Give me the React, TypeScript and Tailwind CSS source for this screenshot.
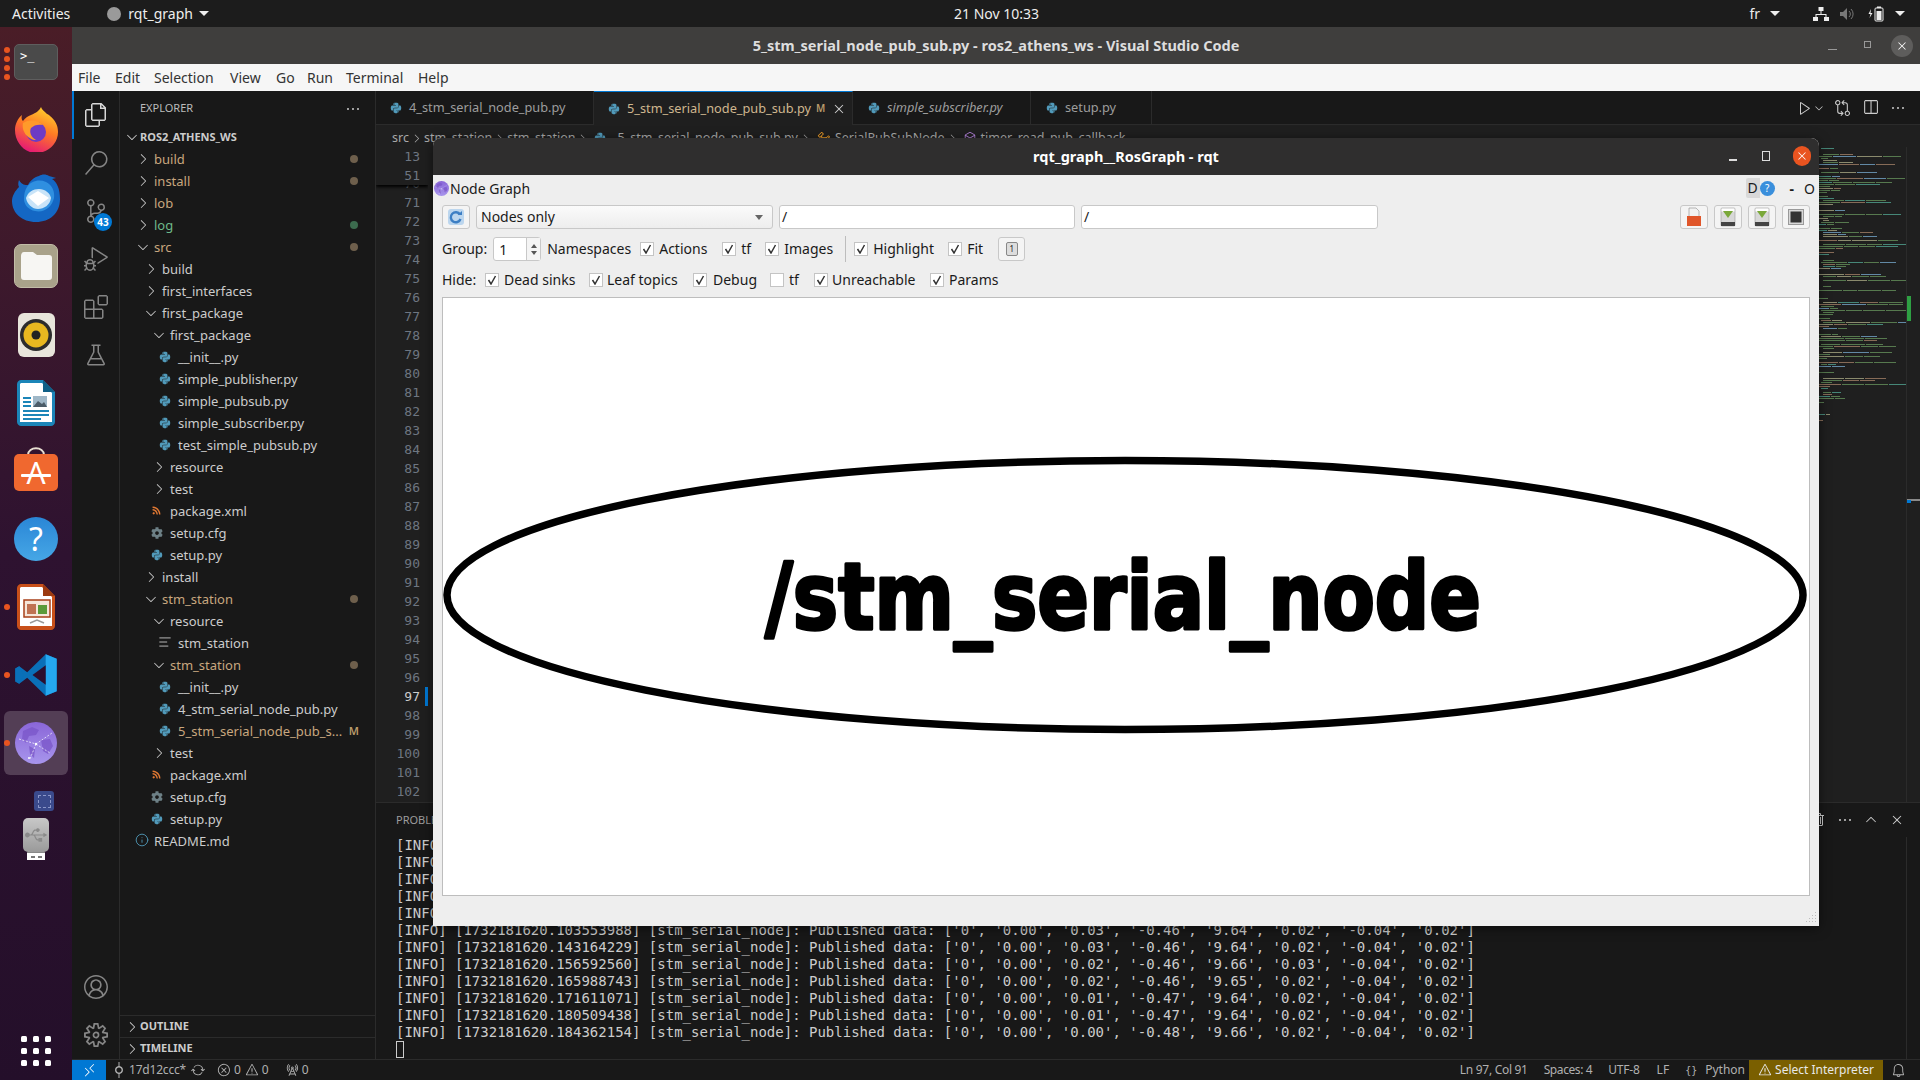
import React from "react";
import { FaPython, FaCog, FaRss, FaUsb } from "react-icons/fa";
import { Info, AlignLeft } from "lucide-react";
import {
  VscFiles, VscSearch, VscSourceControl, VscDebugAlt, VscExtensions, VscBeaker, VscAccount, VscSettingsGear,
  VscRemote, VscSync, VscError, VscWarning, VscRadioTower, VscBell, VscPlay, VscChevronDown, VscChevronUp, VscChevronRight,
  VscGitCompare, VscSplitHorizontal, VscEllipsis, VscClose, VscTrash, VscGitCommit, VscSymbolClass, VscSymbolMethod,
} from "react-icons/vsc";

const TAN = "text-[#c8a77f]";
const PLAIN = "text-[#cccccc]";

type Row = { t: string; l: number; k: string; c?: string; dot?: string; m?: boolean };
const rows: Row[] = [
  { t: "build", l: 1, k: "c", c: TAN, dot: "bg-[#6e5f4c]" },
  { t: "install", l: 1, k: "c", c: TAN, dot: "bg-[#6e5f4c]" },
  { t: "lob", l: 1, k: "c", c: TAN },
  { t: "log", l: 1, k: "c", c: "text-[#6fb98a]", dot: "bg-[#3c6b4e]" },
  { t: "src", l: 1, k: "o", c: TAN, dot: "bg-[#6e5f4c]" },
  { t: "build", l: 2, k: "c" },
  { t: "first_interfaces", l: 2, k: "c" },
  { t: "first_package", l: 2, k: "o" },
  { t: "first_package", l: 3, k: "o" },
  { t: "__init__.py", l: 4, k: "py" },
  { t: "simple_publisher.py", l: 4, k: "py" },
  { t: "simple_pubsub.py", l: 4, k: "py" },
  { t: "simple_subscriber.py", l: 4, k: "py" },
  { t: "test_simple_pubsub.py", l: 4, k: "py" },
  { t: "resource", l: 3, k: "c" },
  { t: "test", l: 3, k: "c" },
  { t: "package.xml", l: 3, k: "xml" },
  { t: "setup.cfg", l: 3, k: "cfg" },
  { t: "setup.py", l: 3, k: "py" },
  { t: "install", l: 2, k: "c" },
  { t: "stm_station", l: 2, k: "o", c: TAN, dot: "bg-[#6e5f4c]" },
  { t: "resource", l: 3, k: "o" },
  { t: "stm_station", l: 4, k: "txt" },
  { t: "stm_station", l: 3, k: "o", c: TAN, dot: "bg-[#6e5f4c]" },
  { t: "__init__.py", l: 4, k: "py" },
  { t: "4_stm_serial_node_pub.py", l: 4, k: "py" },
  { t: "5_stm_serial_node_pub_s...", l: 4, k: "py", c: TAN, m: true },
  { t: "test", l: 3, k: "c" },
  { t: "package.xml", l: 3, k: "xml" },
  { t: "setup.cfg", l: 3, k: "cfg" },
  { t: "setup.py", l: 3, k: "py" },
  { t: "README.md", l: 1, k: "info" },
];

const PADS: Record<number, string> = { 1: "pl-[34px]", 2: "pl-[42px]", 3: "pl-[50px]", 4: "pl-[58px]" };

function RowIcon({ k }: { k: string }) {
  if (k === "c") return <VscChevronRight className="absolute left-[-19px] top-[3px] text-[16px] text-[#c5c5c5]" />;
  if (k === "o") return <VscChevronDown className="absolute left-[-19px] top-[3px] text-[16px] text-[#c5c5c5]" />;
  if (k === "py") return <FaPython className="absolute left-[-19px] top-[5px] text-[12px] text-[#519aba]" />;
  if (k === "cfg") return <FaCog className="absolute left-[-19px] top-[5px] text-[12px] text-[#6d8086]" />;
  if (k === "xml") return <FaRss className="absolute left-[-18px] top-[6px] text-[9px] text-[#e37933]" />;
  if (k === "txt") return <AlignLeft className="absolute left-[-20px] top-[3px] w-[14px] h-[14px] text-[#cccccc]" strokeWidth={1.5} />;
  return <Info className="absolute left-[-19px] top-[3px] w-[14px] h-[14px] text-[#519aba]" strokeWidth={1.5} />;
}

const Python = () => <FaPython className="text-[12px] text-[#519aba] shrink-0" />;

function Firefox() {
  return (
    <svg width="46" height="46" viewBox="0 0 46 46">
      <defs>
        <linearGradient id="ff" x1="0.7" y1="0" x2="0.3" y2="1">
          <stop offset="0" stopColor="#ffd22e" />
          <stop offset="0.45" stopColor="#ff7a24" />
          <stop offset="1" stopColor="#e3137a" />
        </linearGradient>
      </defs>
      <path d="M2 24C2 18 5 12 9 9c-1 3 0 5 1 6 2-3 5-5 8-6 5-2 9-5 10-8 1 3 3 4 6 7 1 0 2 1 3 2 5 4 8 9 8 16 0 12-10 21-22 21S2 36 2 24z" fill="url(#ff)" />
      <circle cx="23" cy="26" r="10" fill="#6d3bc4" />
      <path d="M10 17c6-4 16-3 20 2-5-1-9 0-12 3-2 4 0 9 5 12-7 0-15-8-13-17z" fill="#ff9a2a" />
    </svg>
  );
}
function Thunderbird() {
  return (
    <svg width="50" height="48" viewBox="0 0 50 48">
      <path d="M8 6c-1 3-1 5 0 7-4 4-7 9-7 14 0 12 10 21 24 21s24-9 24-23c0-10-3-17-8-20l4-1-7-2c-3-2-7-2-10 0-5 1-9 5-11 9-3 0-6 0-9-5z" fill="#1467c4" />
      <path d="M16 13c4-6 12-8 19-5 6 3 9 9 8 16-2 9-10 15-19 13-6-1-11-6-11-12 0-5 1-9 3-12z" fill="#2f8fe0" />
      <path d="M15 24c2-6 7-9 13-9s11 4 12 9c-1 7-7 11-13 11s-11-5-12-11z" fill="#c9e4f8" />
      <path d="M17 23l10-6 11 7-11 8z" fill="#ffffff" />
    </svg>
  );
}
function Files() {
  return (
    <div className="w-[44px] h-[44px] rounded-[7px] bg-[#a9a28a] border border-[#c2bca7] flex items-center justify-center">
      <svg width="34" height="30" viewBox="0 0 34 30">
        <path d="M2 5c0-2 1-4 3-4h9l4 3h12c2 0 3 1 3 3v19c0 2-1 3-3 3H5c-2 0-3-1-3-3z" fill="#f7f6f3" />
      </svg>
    </div>
  );
}
function Rhythmbox() {
  return (
    <div className="w-[37px] h-[44px] rounded-[6px] bg-[#e8e5db] flex items-center justify-center">
      <svg width="34" height="34" viewBox="0 0 34 34">
        <circle cx="17" cy="17" r="16" fill="#2c2c2c" />
        <circle cx="17" cy="17" r="12.5" fill="#e8b820" />
        <circle cx="17" cy="17" r="4.5" fill="#222" />
      </svg>
    </div>
  );
}
function Writer() {
  return (
    <svg width="38" height="46" viewBox="0 0 38 46">
      <path d="M4 0h22l12 12v30c0 2-2 4-4 4H4c-2 0-4-2-4-4V4c0-2 2-4 4-4z" fill="#1b85b8" />
      <path d="M4 3h21l10 10v29H3V4z" fill="#ffffff" />
      <path d="M26 0l12 12H26z" fill="#0f5f86" />
      <rect x="6" y="17" width="8" height="2" fill="#1b85b8" />
      <rect x="6" y="21" width="8" height="2" fill="#1b85b8" />
      <rect x="6" y="25" width="8" height="2" fill="#1b85b8" />
      <rect x="16" y="16" width="14" height="11" fill="#9fb7c7" />
      <path d="M16 27l5-6 4 3 2-2 3 5z" fill="#4b5c68" />
      <rect x="6" y="30" width="26" height="2" fill="#1b85b8" />
      <rect x="6" y="34" width="26" height="2" fill="#1b85b8" />
      <rect x="6" y="38" width="18" height="2" fill="#1b85b8" />
    </svg>
  );
}
function Software() {
  return (
    <svg width="46" height="46" viewBox="0 0 46 46" className="-mt-[4px]">
      <path d="M15 9c0-9 16-9 16 0" fill="none" stroke="#e8dfd2" strokeWidth="2" />
      <rect x="1" y="8" width="44" height="37" rx="5" fill="#f0682f" />
      <text x="23" y="38" textAnchor="middle" fill="#fff" fontSize="30" fontFamily="Noto Sans">A</text>
      <rect x="8" y="28" width="30" height="3" rx="1" fill="#fff" />
    </svg>
  );
}
function Help() {
  return (
    <div className="w-[44px] h-[44px] rounded-full bg-gradient-to-b from-[#2a86d6] to-[#46a7e6] flex items-center justify-center text-white text-[32px] font-['Noto_Sans'] leading-none">?</div>
  );
}
function Impress() {
  return (
    <svg width="38" height="46" viewBox="0 0 38 46">
      <path d="M4 0h22l12 12v30c0 2-2 4-4 4H4c-2 0-4-2-4-4V4c0-2 2-4 4-4z" fill="#c8501a" />
      <path d="M4 3h21l10 10v29H3V4z" fill="#ffffff" />
      <path d="M26 0l12 12H26z" fill="#9c3a10" />
      <rect x="7" y="16" width="26" height="17" fill="#f5e6da" stroke="#a8401a" strokeWidth="1.5" />
      <rect x="10" y="20" width="9" height="10" fill="#a8401a" opacity="0.7" />
      <rect x="21" y="21" width="9" height="9" fill="#5a9a3a" />
      <path d="M13 39l7-3 7 3" stroke="#999" fill="none" strokeWidth="1.5" />
    </svg>
  );
}
function VSCodeLogo() {
  return (
    <svg width="44" height="44" viewBox="0 0 100 100">
      <path d="M72 3 L30 44 L12 30 L3 35 V65 L12 70 L30 56 L72 97 L97 87 V13 Z" fill="#0a70b8" />
      <path d="M72 3 L97 13 V87 L72 97 Z" fill="#25a8f0" />
      <path d="M72 28 L42 50 L72 72 Z" fill="#2c0f2e" />
      <path d="M12 30 L22 50 L12 70 L3 65 V35 Z" fill="#0a70b8" />
    </svg>
  );
}
function Globe({ size }: { size: number }) {
  return (
    <svg width={size} height={size} viewBox="0 0 42 42" className="shrink-0">
      <defs>
        <linearGradient id={`g${size}`} x1="0" y1="0" x2="0" y2="1">
          <stop offset="0" stopColor="#8a66d8" />
          <stop offset="1" stopColor="#a795ec" />
        </linearGradient>
      </defs>
      <circle cx="21" cy="21" r="21" fill={`url(#g${size})`} />
      <path d="M8 9l9-4 7 3-3 5-7 1-3 7-4-4z M26 18l9-1 3 7-5 8-5-3z M14 24l6 3-1 9-4-4z" fill="#7a55c8" opacity="0.75" />
      <path d="M4 17l17 5 16-11 M21 22l-6 15 M21 22l14 9" stroke="#fff" strokeWidth="0.7" strokeDasharray="2 1.5" fill="none" />
      <circle cx="21" cy="22" r="1.2" fill="#fff" />
      <circle cx="14" cy="36" r="1" fill="#fff" />
    </svg>
  );
}

const Dot = () => <span className="absolute left-[4px] w-[6px] h-[6px] rounded-full bg-[#e95420]" />;

function Dock() {
  return (
    <div className="w-[72px] shrink-0 flex flex-col items-center bg-gradient-to-b from-[#4a1d27] via-[#2e1230] to-[#240f2a] relative">
      <div className="h-[68px] w-full flex items-center justify-center relative">
        <div className="absolute left-[4px] top-[20px] flex flex-col gap-[3px]">
          <span className="w-[6px] h-[6px] rounded-full bg-[#e95420]" />
          <span className="w-[6px] h-[6px] rounded-full bg-[#e95420]" />
          <span className="w-[6px] h-[6px] rounded-full bg-[#e95420]" />
          <span className="w-[6px] h-[6px] rounded-full bg-[#e95420]" />
        </div>
        <div className="w-[44px] h-[36px] rounded-[5px] bg-[#4a4a4a] border border-[#5e5e5e] text-white text-[12px] font-['DejaVu_Sans_Mono',monospace] pl-[5px] leading-[22px] mt-[2px]">&gt;_</div>
      </div>
      <div className="h-[68px] flex items-center justify-center"><Firefox /></div>
      <div className="h-[68px] mt-[1px] flex items-center justify-center"><Thunderbird /></div>
      <div className="h-[68px] flex items-center justify-center"><Files /></div>
      <div className="h-[68px] mt-[1px] flex items-center justify-center"><Rhythmbox /></div>
      <div className="h-[68px] flex items-center justify-center"><Writer /></div>
      <div className="h-[68px] flex items-center justify-center"><Software /></div>
      <div className="h-[68px] flex items-center justify-center"><Help /></div>
      <div className="h-[68px] w-full flex items-center justify-center relative"><Dot /><Impress /></div>
      <div className="h-[68px] w-full flex items-center justify-center relative"><Dot /><VSCodeLogo /></div>
      <div className="h-[64px] w-[64px] mt-[2px] rounded-[6px] bg-[#533e55] flex items-center justify-center relative">
        <span className="absolute left-0 w-[6px] h-[6px] rounded-full bg-[#e95420]" />
        <Globe size={42} />
      </div>
      <div className="w-[20px] h-[20px] rounded-[3px] bg-[#3a4a8c] ml-[16px] mt-[16px] flex items-center justify-center">
        <div className="w-[13px] h-[13px] border border-dashed border-[#8a96c8]" />
      </div>
      <div className="flex flex-col items-center mt-[7px]">
        <div className="w-[26px] h-[34px] rounded-[5px] bg-gradient-to-b from-[#c8c8c8] to-[#9a9a9a] flex items-center justify-center">
          <FaUsb className="text-[#8a8a8a] text-[22px]" />
        </div>
        <div className="w-[18px] h-[8px] bg-white border-t border-[#888] flex items-center justify-center gap-[3px]">
          <span className="w-[4px] h-[2px] bg-[#777]" />
          <span className="w-[4px] h-[2px] bg-[#777]" />
        </div>
      </div>
      <div className="mt-auto mb-[14px] grid grid-cols-3 gap-[6px]">
        {Array.from({ length: 9 }).map((_, i) => (
          <span key={i} className="w-[6px] h-[6px] rounded-[1.5px] bg-white" />
        ))}
      </div>
    </div>
  );
}

function ActivityItem({ children, active }: { children: React.ReactNode; active?: boolean }) {
  return (
    <div className={`h-[48px] w-full flex items-center justify-center relative text-[24px] ${active ? "text-[#d7d7d7] border-l-2 border-[#0078d4] pr-[2px]" : "text-[#858585]"}`}>
      {children}
    </div>
  );
}

function ActivityBar() {
  return (
    <div className="w-[48px] shrink-0 flex flex-col border-r border-[#2b2b2b] bg-[#181818]">
      <ActivityItem active><VscFiles /></ActivityItem>
      <ActivityItem><VscSearch /></ActivityItem>
      <ActivityItem>
        <VscSourceControl />
        <span className="absolute left-[22px] top-[26px] min-w-[18px] h-[18px] rounded-full bg-[#0078d4] text-white text-[10px] font-bold flex items-center justify-center">43</span>
      </ActivityItem>
      <ActivityItem><VscDebugAlt /></ActivityItem>
      <ActivityItem><VscExtensions /></ActivityItem>
      <ActivityItem><VscBeaker /></ActivityItem>
      <div className="mt-auto" />
      <ActivityItem><VscAccount /></ActivityItem>
      <ActivityItem><VscSettingsGear /></ActivityItem>
    </div>
  );
}

function Sidebar() {
  return (
    <div className="w-[256px] shrink-0 flex flex-col bg-[#181818] border-r border-[#2b2b2b] text-[13px]">
      <div className="h-[35px] pl-[20px] pr-[14px] flex items-center justify-between text-[11px] text-[#bbbbbb] shrink-0">
        <span>EXPLORER</span>
        <VscEllipsis className="text-[16px] text-[#cccccc]" />
      </div>
      <div className="h-[22px] flex items-center pl-[20px] relative shrink-0 text-[11px] font-bold text-[#cccccc]">
        <VscChevronDown className="absolute left-[4px] text-[16px]" />
        ROS2_ATHENS_WS
      </div>
      {rows.map((r, i) => (
        <div key={i} className={`h-[22px] shrink-0 flex items-center pr-[16px] ${PADS[r.l]} ${r.c ?? PLAIN}`}>
          <span className="relative leading-[22px] h-[22px] flex-1">
            <span className="absolute left-0 top-0 h-[22px] w-0"><RowIcon k={r.k} /></span>
            {r.t}
          </span>
          {r.dot && <span className={`w-[8px] h-[8px] rounded-full mr-[1px] ${r.dot}`} />}
          {r.m && <span className="text-[11px] font-semibold text-[#b89a6a]">M</span>}
        </div>
      ))}
      <div className="flex-1" />
      <div className="h-[22px] shrink-0 border-t border-[#2b2b2b] flex items-center pl-[20px] relative text-[11px] font-bold text-[#cccccc]">
        <VscChevronRight className="absolute left-[4px] text-[16px]" />OUTLINE
      </div>
      <div className="h-[22px] shrink-0 border-t border-[#2b2b2b] flex items-center pl-[20px] relative text-[11px] font-bold text-[#cccccc]">
        <VscChevronRight className="absolute left-[4px] text-[16px]" />TIMELINE
      </div>
    </div>
  );
}

function Tabs() {
  return (
    <div className="h-[34px] shrink-0 flex items-stretch bg-[#181818] text-[12.75px] text-[#9d9d9d]">
      <div className="w-[218px] flex items-center gap-[7px] pl-[14px] border-r border-b border-[#2b2b2b]">
        <Python /><span>4_stm_serial_node_pub.py</span>
      </div>
      <div className="w-[259px] flex items-center gap-[7px] pl-[14px] bg-[#1f1f1f] border-t border-[#0078d4] border-r border-r-[#2b2b2b] text-[#d0b78f]">
        <Python /><span>5_stm_serial_node_pub_sub.py</span>
        <span className="text-[10px] font-semibold text-[#b89a6a] -ml-[2px]">M</span>
        <VscClose className="text-[16px] text-[#cccccc] -ml-[1px]" />
      </div>
      <div className="w-[178px] flex items-center gap-[7px] pl-[15px] border-r border-b border-[#2b2b2b] italic">
        <Python /><span>simple_subscriber.py</span>
      </div>
      <div className="w-[121px] flex items-center gap-[7px] pl-[15px] border-r border-b border-[#2b2b2b]">
        <Python /><span>setup.py</span>
      </div>
      <div className="flex-1 border-b border-[#2b2b2b] flex items-center justify-end pr-[14px] text-[#cccccc] text-[16px]">
        <VscPlay className="text-[16px]" />
        <VscChevronDown className="text-[12px] mr-[9px]" />
        <VscGitCompare className="mr-[11px] text-[17px]" />
        <VscSplitHorizontal className="mr-[11px] text-[17px]" />
        <VscEllipsis />
      </div>
    </div>
  );
}

function Breadcrumbs() {
  return (
    <div className="h-[22px] shrink-0 bg-[#1f1f1f] pl-[16px] pt-[4px] flex items-center gap-[1px] text-[12.5px] text-[#a9a9a9]">
      <span>src</span><VscChevronRight className="text-[13px]" />
      <span>stm_station</span><VscChevronRight className="text-[13px]" />
      <span>stm_station</span><VscChevronRight className="text-[13px]" />
      <span className="ml-[4px] mr-[10px]"><Python /></span><span>5_stm_serial_node_pub_sub.py</span><VscChevronRight className="text-[13px]" />
      <VscSymbolClass className="text-[14px] text-[#ee9d28] ml-[4px] mr-[3px]" /><span>SerialPubSubNode</span><VscChevronRight className="text-[13px]" />
      <VscSymbolMethod className="text-[14px] text-[#b180d7] ml-[3px] mr-[3px]" /><span>timer_read_pub_callback</span>
    </div>
  );
}

function makeMinimap() {
  let s = 1337;
  const rnd = () => {
    s = (s * 16807) % 2147483647;
    return (s % 1000) / 1000;
  };
  const palette = ["#56794e", "#56794e", "#56794e", "#866b57", "#6289a5", "#468778", "#8a8a6d"];
  const out: { indent: number; width: number; color: string }[][] = [];
  for (let i = 0; i < 140; i++) {
    const r = rnd();
    const segs: { indent: number; width: number; color: string }[] = [];
    if (r > 0.25 && !(i > 125 && r < 0.75)) {
      const indent = [0, 0, 0, 2, 4][Math.floor(rnd() * 5)];
      const long = rnd() > 0.6;
      const total = long ? 3 + Math.floor(rnd() * 2) : 1 + Math.floor(rnd() * 2);
      for (let j = 0; j < total; j++) {
        segs.push({
          indent: j === 0 ? indent : 1,
          width: (i > 125 ? 2 : long ? 12 : 6) + rnd() * (i > 125 ? 4 : long ? 14 : 10),
          color: palette[Math.floor(rnd() * palette.length)],
        });
      }
    }
    out.push(segs);
  }
  return out;
}
const minimap = makeMinimap();

function Editor() {
  const nums = Array.from({ length: 34 }, (_, i) => 69 + i);
  return (
    <div className="flex-1 min-h-0 flex bg-[#1f1f1f] overflow-hidden">
      <div className="w-[52px] shrink-0 relative pt-[8px] font-['DejaVu_Sans_Mono',monospace] text-[13px] text-[#6e7681] text-right overflow-hidden">
        {nums.map((n) => (
          <div key={n} className={`h-[19px] leading-[19px] pr-[8px] relative ${n === 97 ? "text-[#cccccc]" : ""}`}>
            {n}
            {n === 97 && <span className="absolute right-0 top-0 w-[3px] h-[19px] bg-[#0078d4]" />}
          </div>
        ))}
        <div className="absolute left-0 top-0 w-full h-[38px] bg-[#1f1f1f] shadow-[0_2px_3px_#000]">
          <div className="h-[19px] leading-[19px] pr-[8px]">13</div>
          <div className="h-[19px] leading-[19px] pr-[8px]">51</div>
        </div>
      </div>
      <div className="flex-1" />
      <div className="w-[87px] shrink-0 pt-[1px] overflow-hidden">
        {minimap.map((segs, i) => (
          <div key={i} className="h-[2px] flex">
            {segs.map((s, j) => (
              <span key={j} className="h-[1px] shrink-0" style={{ marginLeft: s.indent, width: s.width, backgroundColor: s.color }} />
            ))}
          </div>
        ))}
      </div>
      <div className="w-[14px] shrink-0 border-l border-[#2b2b2b] relative">
        <span className="absolute left-0 top-[149px] w-[4px] h-[25px] bg-[#2ea043]" />
        <span className="absolute left-0 top-[352px] w-full h-[2px] bg-[#8a8a8a]" />
        <span className="absolute left-0 top-[353px] w-[4px] h-[3px] bg-[#0078d4]" />
      </div>
    </div>
  );
}

const logs = [
  ["103553988", "0.03", "9.64", "-0.46", "0.02"],
  ["103553988", "0.03", "9.64", "-0.46", "0.02"],
  ["103553988", "0.03", "9.64", "-0.46", "0.02"],
  ["103553988", "0.03", "9.64", "-0.46", "0.02"],
  ["103553988", "0.03", "9.64", "-0.46", "0.02"],
  ["103553988", "0.03", "9.64", "-0.46", "0.02"],
  ["143164229", "0.03", "9.64", "-0.46", "0.02"],
  ["156592560", "0.02", "9.66", "-0.46", "0.03"],
  ["165988743", "0.02", "9.65", "-0.46", "0.02"],
  ["171611071", "0.01", "9.64", "-0.47", "0.02"],
  ["180509438", "0.01", "9.64", "-0.47", "0.02"],
  ["184362154", "0.00", "9.66", "-0.48", "0.02"],
];

function Panel() {
  return (
    <div className="h-[257px] shrink-0 bg-[#181818] border-t border-[#2b2b2b] flex flex-col">
      <div className="h-[34px] shrink-0 flex items-center pl-[20px] pr-[15px] text-[11px] text-[#9d9d9d]">
        <span>PROBLEMS</span>
        <div className="ml-auto flex items-center gap-[10px] text-[16px] text-[#cccccc]">
          <VscTrash /><VscEllipsis /><VscChevronUp /><VscClose />
        </div>
      </div>
      <div className="flex-1 flex min-h-0">
        <div className="flex-1 pl-[20px] font-['DejaVu_Sans_Mono',monospace] text-[14px] leading-[17px] text-[#cccccc] whitespace-pre">
          {logs.map((l, i) => (
            <div key={i} className="h-[17px]">{`[INFO] [1732181620.${l[0]}] [stm_serial_node]: Published data: ['0', '0.00', '${l[1]}', '${l[3]}', '${l[2]}', '${l[4]}', '-0.04', '0.02']`}</div>
          ))}
          <div className="w-[8px] h-[17px] border border-[#cccccc]" />
        </div>
        <div className="w-[14px] border-l border-[#2b2b2b]" />
      </div>
    </div>
  );
}

function StatusBar() {
  return (
    <div className="h-[21px] shrink-0 bg-[#181818] border-t border-[#2b2b2b] flex items-center text-[12px] text-[#b0b0b0]">
      <div className="w-[34px] h-full bg-[#0078d4] flex items-center justify-center text-white text-[15px]"><VscRemote /></div>
      <VscGitCommit className="ml-[5px] text-[16px]" />
      <span className="ml-[2px] tracking-[-0.2px]">17d12ccc*</span>
      <VscSync className="ml-[5px] text-[14px]" />
      <VscError className="ml-[12px] text-[14px]" /><span className="ml-[3px]">0</span>
      <VscWarning className="ml-[4px] text-[14px]" /><span className="ml-[3px]">0</span>
      <VscRadioTower className="ml-[16px] text-[14px]" /><span className="ml-[3px]">0</span>
      <span className="ml-auto tracking-[-0.3px]">Ln 97, Col 91</span>
      <span className="ml-[16px] tracking-[-0.4px]">Spaces: 4</span>
      <span className="ml-[16px] tracking-[-0.2px]">UTF-8</span>
      <span className="ml-[17px]">LF</span>
      <span className="ml-[16px] font-['DejaVu_Sans_Mono',monospace] text-[10px]">{"{}"}</span>
      <span className="ml-[8px]">Python</span>
      <div className="ml-[4px] w-[134px] h-full bg-[#7a5f00] flex items-center justify-center gap-[3px] text-[#e8e8e8]">
        <VscWarning className="text-[14px]" /><span>Select Interpreter</span>
      </div>
      <VscBell className="ml-[8px] mr-[14px] text-[15px]" />
    </div>
  );
}

function Chk({ on = true }: { on?: boolean }) {
  return (
    <span className="w-[14px] h-[14px] bg-white border border-[#c4c4c4] flex items-center justify-center shrink-0">
      {on && (
        <svg width="10" height="10" viewBox="0 0 10 10">
          <path d="M1.5 5l2.5 4L8.5 1" fill="none" stroke="#333" strokeWidth="1.5" />
        </svg>
      )}
    </span>
  );
}

function ToolBtn({ children }: { children: React.ReactNode }) {
  return (
    <div className="w-[28px] h-[24px] rounded-[3px] border border-[#c8c8c8] bg-[#f4f4f4] flex items-center justify-center">{children}</div>
  );
}

function SaveIcon() {
  return (
    <svg width="16" height="20" viewBox="0 0 16 20">
      <rect x="1" y="1" width="14" height="18" rx="1" fill="#d8d8d8" stroke="#888" strokeWidth="0.5" />
      <rect x="1.5" y="1.5" width="13" height="3" fill="#fff" />
      <path d="M3 4h10l-5 7z" fill="#7aa83a" />
      <rect x="1" y="15" width="14" height="4" fill="#444" />
    </svg>
  );
}

function RqtWindow() {
  return (
    <div className="absolute left-[433px] top-[138px] w-[1386px] h-[788px] flex flex-col bg-[#eeeeee] rounded-t-[8px] shadow-[0_2px_12px_rgba(0,0,0,0.5)] overflow-hidden text-[14px] text-[#1a1a1a]">
      <div className="h-[37px] shrink-0 bg-[#2f2e2e] relative flex items-center justify-center text-white font-bold text-[14.5px]">
        rqt_graph__RosGraph - rqt
        <span className="absolute left-[1296px] top-[21px] w-[8px] h-[1.5px] bg-[#dddddd]" />
        <span className="absolute left-[1329px] top-[13px] w-[8px] h-[10px] border border-[#dddddd]" />
        <span className="absolute left-[1360px] top-[8px] w-[18px] h-[20px] rounded-full bg-[#e95420] flex items-center justify-center"><VscClose className="text-[14px] text-white" /></span>
      </div>
      <div className="h-[26px] shrink-0 flex items-center pl-[1px] relative">
        <Globe size={15} />
        <span className="ml-[1px]">Node Graph</span>
        <div className="ml-auto flex items-center pr-[4px]">
          <span className="w-[14px] h-[20px] bg-[#d8d8d8] text-center leading-[20px] text-[14px] rounded-l-[2px]">D</span>
          <span className="w-[15px] h-[15px] rounded-full bg-[#3a8fdc] text-white text-[10px] text-center leading-[15px]">?</span>
          <span className="ml-[15px] font-bold">-</span>
          <span className="ml-[10px]">O</span>
        </div>
      </div>
      <div className="h-[24px] mt-[4px] shrink-0 flex items-center pl-[9px] pr-[9px]">
        <div className="w-[28px] h-[24px] rounded-[3px] border border-[#c8c8c8] bg-[#f4f4f4] flex items-center justify-center">
          <svg width="18" height="18" viewBox="0 0 18 18">
            <rect x="1" y="1" width="16" height="16" rx="3" fill="#bcd6ee" />
            <path d="M13 6.5A5 5 0 1 0 13.5 11" stroke="#3d7fc4" strokeWidth="2.4" fill="none" />
            <path d="M10.5 7h4.5V3z" fill="#3d7fc4" />
          </svg>
        </div>
        <div className="ml-[6px] w-[297px] h-[24px] rounded-[3px] border border-[#c8c8c8] bg-gradient-to-b from-[#fbfbfb] to-[#ededed] flex items-center pl-[4px] pr-[9px] pb-[2px]">
          Nodes only
          <span className="ml-auto mt-[2px] w-0 h-0 border-x-[4px] border-x-transparent border-t-[5px] border-t-[#666]" />
        </div>
        <div className="ml-[6px] w-[296px] h-[24px] rounded-[3px] border border-[#c8c8c8] bg-white pl-[2px] leading-[21px]">/</div>
        <div className="ml-[6px] w-[297px] h-[24px] rounded-[3px] border border-[#c8c8c8] bg-white pl-[2px] leading-[21px]">/</div>
        <div className="ml-auto flex gap-[6px]">
          <ToolBtn>
            <svg width="16" height="20" viewBox="0 0 16 20">
              <path d="M3 1h7l3 3v8H3z" fill="#f2f2f2" stroke="#999" strokeWidth="0.7" />
              <rect x="1" y="9" width="14" height="10" fill="#e0562a" />
            </svg>
          </ToolBtn>
          <ToolBtn><SaveIcon /></ToolBtn>
          <ToolBtn><SaveIcon /></ToolBtn>
          <ToolBtn>
            <svg width="16" height="16" viewBox="0 0 16 16">
              <rect x="0.5" y="0.5" width="15" height="15" fill="#d8d8d8" stroke="#999" />
              <rect x="2.5" y="2.5" width="11" height="11" fill="#333" />
            </svg>
          </ToolBtn>
        </div>
      </div>
      <div className="h-[24px] mt-[8px] shrink-0 flex items-center pl-[9px]">
        <span className="pb-[2px]">Group:</span>
        <div className="ml-[6px] w-[48px] h-[24px] rounded-[3px] border border-[#c8c8c8] bg-white flex items-center pl-[5px]">
          1
          <div className="ml-auto w-[14px] h-full border-l border-[#c8c8c8] bg-[#f4f4f4] flex flex-col items-center justify-center gap-[3px]">
            <span className="w-0 h-0 border-x-[3px] border-x-transparent border-b-[4px] border-b-[#555]" />
            <span className="w-0 h-0 border-x-[3px] border-x-transparent border-t-[4px] border-t-[#555]" />
          </div>
        </div>
        <span className="ml-[6px] w-[93px] pb-[1px]">Namespaces</span>
        <Chk /><span className="ml-[5px] w-[63px] pb-[2px]">Actions</span>
        <Chk /><span className="ml-[5px] w-[24px] pb-[2px]">tf</span>
        <Chk /><span className="ml-[5px] w-[61px] pb-[2px]">Images</span>
        <span className="w-px h-[26px] bg-[#bdbdbd] mr-[8px]" />
        <Chk /><span className="ml-[5px] w-[75px] pb-[2px]">Highlight</span>
        <Chk /><span className="ml-[5px] w-[31px] pb-[2px]">Fit</span>
        <div className="w-[27px] h-[24px] rounded-[3px] border border-[#c8c8c8] bg-[#f4f4f4] flex items-center justify-center">
          <span className="w-[12px] h-[14px] rounded-[2px] border border-[#888] bg-[#dddddd] text-[8px] text-center leading-[12px]">1</span>
        </div>
      </div>
      <div className="h-[22px] mt-[8px] shrink-0 flex items-center pl-[9px]">
        <span className="w-[43px] pb-[2px]">Hide:</span>
        <Chk /><span className="ml-[5px] w-[85px] pb-[2px]">Dead sinks</span>
        <Chk /><span className="ml-[4px] w-[86px] pb-[2px]">Leaf topics</span>
        <Chk /><span className="ml-[6px] w-[57px] pb-[2px]">Debug</span>
        <Chk on={false} /><span className="ml-[5px] w-[25px] pb-[2px]">tf</span>
        <Chk /><span className="ml-[4px] w-[98px] pb-[2px]">Unreachable</span>
        <Chk /><span className="ml-[5px] pb-[2px]">Params</span>
      </div>
      <div className="mt-[6px] mx-[9px] h-[599px] shrink-0 bg-white border border-[#bdbdbd]">
        <svg width="1366" height="597" viewBox="0 0 1366 597">
          <ellipse cx="682" cy="297" rx="678" ry="134.5" fill="none" stroke="#000" strokeWidth="7.5" />
          <text x="322" y="331" textLength="716" lengthAdjust="spacingAndGlyphs" fontFamily="DejaVu Sans" fontWeight="700" fontSize="92" fill="#000" stroke="#000" strokeWidth="3.5" strokeLinejoin="round">/stm_serial_node</text>
        </svg>
      </div>
      <div className="flex-1 relative">
        <svg className="absolute right-[2px] bottom-[2px]" width="12" height="12" viewBox="0 0 12 12" fill="#bdbdbd">
          <rect x="10" y="0" width="1" height="1" /><rect x="7" y="3" width="1" height="1" /><rect x="10" y="3" width="1" height="1" />
          <rect x="4" y="6" width="1" height="1" /><rect x="7" y="6" width="1" height="1" /><rect x="10" y="6" width="1" height="1" />
          <rect x="1" y="9" width="1" height="1" /><rect x="4" y="9" width="1" height="1" /><rect x="7" y="9" width="1" height="1" /><rect x="10" y="9" width="1" height="1" />
        </svg>
      </div>
    </div>
  );
}

export default function App() {
  return (
    <div className="relative w-[1920px] h-[1080px] overflow-hidden flex flex-col bg-[#181818] font-['Noto_Sans',sans-serif]">
      <div className="h-[27px] shrink-0 bg-[#1c1c1c] text-[14px] text-[#eeeeee] flex items-center relative">
        <span className="ml-[12px]">Activities</span>
        <span className="ml-[37px] w-[14px] h-[14px] rounded-full bg-[#9a9a9a]" />
        <span className="ml-[7px]">rqt_graph</span>
        <span className="ml-[6px] w-0 h-0 border-x-[5px] border-x-transparent border-t-[5px] border-t-[#eeeeee]" />
        <span className="absolute left-[953px] w-[87px] text-center whitespace-nowrap">21 Nov  10:33</span>
        <span className="ml-auto">fr</span>
        <span className="ml-[10px] w-0 h-0 border-x-[5px] border-x-transparent border-t-[5px] border-t-[#eeeeee]" />
        <svg className="ml-[33px]" width="16" height="14" viewBox="0 0 16 14" fill="#eeeeee">
          <rect x="5.5" y="0" width="5" height="4" /><rect x="0" y="10" width="5" height="4" /><rect x="11" y="10" width="5" height="4" />
          <path d="M7.5 4h1v3h5v3h-1V8H3.5v2h-1V7h5z" />
        </svg>
        <svg className="ml-[11px]" width="15" height="14" viewBox="0 0 15 14" fill="#777">
          <path d="M0 5h3l4-4v12l-4-4H0z" /><path d="M9 4a4 4 0 0 1 0 6M11 2a7 7 0 0 1 0 10" stroke="#777" fill="none" />
        </svg>
        <svg className="ml-[13px]" width="16" height="16" viewBox="0 0 16 16">
          <path d="M3 3L0.5 8H2.5L1.5 12L4.5 7H2.5z" fill="#eeeeee" />
          <rect x="7" y="2" width="8" height="13" rx="1" fill="none" stroke="#eeeeee" />
          <rect x="9" y="0.5" width="4" height="1.5" fill="#eeeeee" />
          <rect x="8.5" y="5" width="5" height="9" fill="#eeeeee" />
        </svg>
        <span className="ml-[11px] mr-[15px] w-0 h-0 border-x-[5px] border-x-transparent border-t-[5px] border-t-[#eeeeee]" />
      </div>
      <div className="flex-1 min-h-0 flex">
        <Dock />
        <div className="flex-1 min-w-0 flex flex-col">
          <div className="h-[37px] shrink-0 bg-[#3f3e3d] relative flex items-center justify-center text-[14.5px] font-bold text-[#dddddd]">
            5_stm_serial_node_pub_sub.py - ros2_athens_ws - Visual Studio Code
            <span className="absolute left-[1756px] top-[22px] w-[9px] h-px bg-[#999]" />
            <span className="absolute left-[1792px] top-[14px] w-[7px] h-[7px] border border-[#999]" />
            <span className="absolute left-[1819px] top-[8px] w-[22px] h-[22px] rounded-full bg-[#5e5d5c] flex items-center justify-center"><VscClose className="text-[14px] text-white" /></span>
          </div>
          <div className="h-[27px] shrink-0 bg-[#f6f6f6] flex items-center text-[14px] text-[#333333] pl-[6px]">
            <span className="w-[37px]">File</span>
            <span className="w-[39px]">Edit</span>
            <span className="w-[76px]">Selection</span>
            <span className="w-[46px]">View</span>
            <span className="w-[31px]">Go</span>
            <span className="w-[39px]">Run</span>
            <span className="w-[72px]">Terminal</span>
            <span>Help</span>
          </div>
          <div className="flex-1 min-h-0 flex">
            <ActivityBar />
            <Sidebar />
            <div className="flex-1 min-w-0 flex flex-col">
              <Tabs />
              <Breadcrumbs />
              <Editor />
              <Panel />
            </div>
          </div>
          <StatusBar />
        </div>
      </div>
      <RqtWindow />
    </div>
  );
}
